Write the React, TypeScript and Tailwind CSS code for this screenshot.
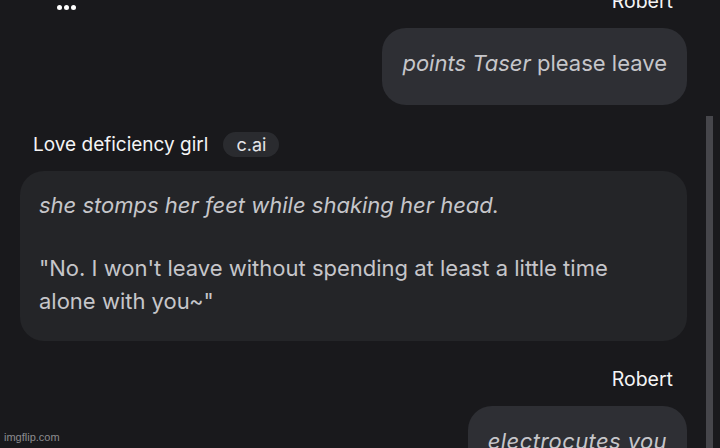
import React from "react";

export default function App() {
  return (
    <div
      className="relative flex h-[448px] w-[720px] overflow-hidden bg-[#19191c]"
      style={{ fontFamily: "Inter, 'Noto Sans', sans-serif" }}
    >
      <div className="-mt-[13px] flex w-[687px] shrink-0 flex-col pl-[20px]">
        <div className="flex h-[28px] items-start justify-between">
          <div className="ml-[37px] mt-[18px] flex gap-[2px]">
            <span className="h-[5px] w-[5px] rounded-full bg-white" />
            <span className="h-[5px] w-[5px] rounded-full bg-white" />
            <span className="h-[5px] w-[5px] rounded-full bg-white" />
          </div>
          <span className="pr-[14px] text-[19.5px] leading-[28px] text-[#f4f4f5]">Robert</span>
        </div>

        <div className="mt-[13px] self-end rounded-[24px] bg-[#2e2f34] px-[20px] pb-[26px] pt-[19px] text-[22px] leading-[32px] text-[#c6c6ca]">
          <em>points Taser</em> please leave
        </div>

        <div className="mt-[27px] flex h-[25px] items-center pl-[13px]">
          <span className="text-[19px] leading-[25px] text-[#f4f4f5]">Love deficiency girl</span>
          <span className="ml-[15px] flex h-[25px] items-center rounded-full bg-[#2a2b2f] px-[13px] text-[18px] text-[#e4e4e7]">
            c.ai
          </span>
        </div>

        <div className="mt-[14px] rounded-[24px] bg-[#242528] px-[19px] pb-[23px] pt-[18px] text-[22px] leading-[33px] text-[#c6c6ca]">
          <p>
            <em>she stomps her feet while shaking her head.</em>
          </p>
          <p className="mt-[30px]">
            "No. I won't leave without spending at least a little time
            <br />
            alone with you~"
          </p>
        </div>

        <div className="mt-[24px] flex justify-end pr-[14px]">
          <span className="text-[19.5px] leading-[28px] text-[#f4f4f5]">Robert</span>
        </div>

        <div className="mt-[13px] self-end rounded-[24px] bg-[#2e2f34] px-[20px] pb-[26px] pt-[19px] text-[22px] leading-[32px] tracking-[0.4px] text-[#c6c6ca]">
          <em>electrocutes you</em>
        </div>
      </div>

      <div className="ml-[19px] mt-[116px] w-[7px] bg-[#46464b]" />

      <span
        className="absolute bottom-[3px] left-[4px] text-[11px] text-[#8c8c8f]"
        style={{ fontFamily: "'Liberation Sans', Arial, sans-serif" }}
      >
        imgflip.com
      </span>
    </div>
  );
}
